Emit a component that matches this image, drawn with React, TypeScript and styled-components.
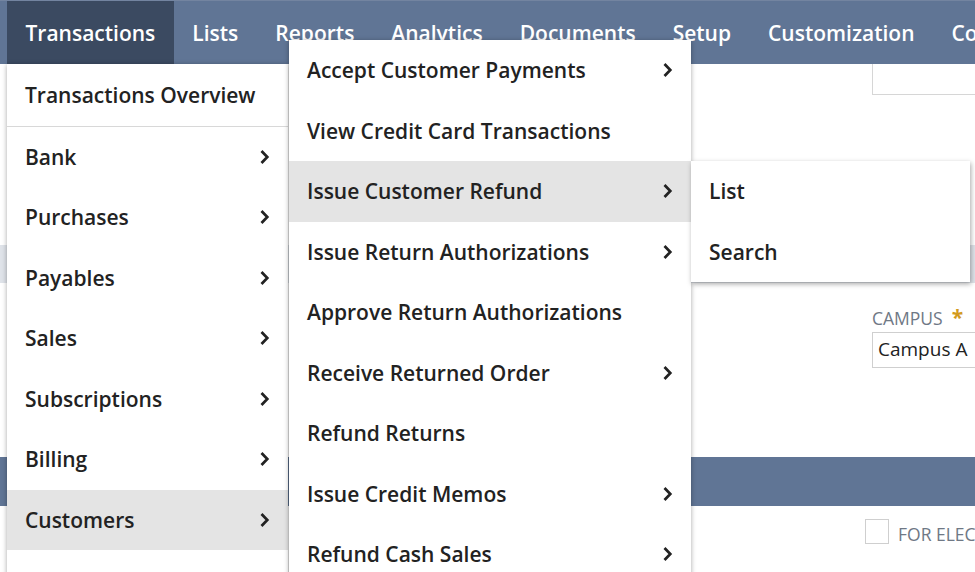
import React from "react";
import styled, { createGlobalStyle } from "styled-components";

const GlobalStyle = createGlobalStyle`
  html, body {
    margin: 0;
    padding: 0;
    background: #fff;
    overflow: hidden;
  }
  body {
    font-family: "Open Sans", "Noto Sans", "Liberation Sans", sans-serif;
    color: #222;
  }
`;

const Page = styled.div`
  position: relative;
  width: 975px;
  height: 572px;
  overflow: hidden;
  background: #fff;
`;

const NavBar = styled.nav`
  display: flex;
  align-items: stretch;
  height: 64px;
  padding-left: 7px;
  background: #607595;
  border-top: 1px solid #7384a0;
  box-sizing: border-box;
  white-space: nowrap;
`;

const NavItem = styled.div<{ $active?: boolean }>`
  display: flex;
  align-items: center;
  padding: 0 18.5px;
  font-size: 21px;
  font-weight: 600;
  color: #fff;
  background: ${(p) => (p.$active ? "#3b4a61" : "transparent")};
`;

const Content = styled.main`
  display: flex;
  flex-direction: column;
`;

const FieldRow = styled.div<{ $height: number }>`
  display: flex;
  flex-direction: column;
  height: ${(p) => p.$height}px;
  padding-left: 872px;
  box-sizing: border-box;
`;

const TopSearch = styled.div`
  width: 130px;
  height: 31px;
  border: 1px solid #d6d6d6;
  border-top: none;
  box-sizing: border-box;
`;

const GrayBand = styled.div`
  height: 38px;
  background: #dfe3e9;
`;

const Label = styled.div`
  margin-top: 23px;
  height: 22px;
  font-size: 17.5px;
  line-height: 22px;
  color: #6f7885;
  white-space: nowrap;
`;

const Required = styled.span`
  margin-left: 9px;
  color: #d39a1e;
  font-weight: 700;
  font-size: 21px;
`;

const Input = styled.div`
  margin-top: 4px;
  width: 130px;
  height: 36px;
  border: 1px solid #cfcfcf;
  box-sizing: border-box;
  padding-left: 5px;
  font-size: 19px;
  line-height: 33px;
  color: #222;
  white-space: nowrap;
`;

const BlueBand = styled.div`
  margin-top: 78px;
  height: 49px;
  background: #607595;
`;

const CheckRow = styled.div`
  display: flex;
  align-items: center;
  gap: 9px;
  margin-top: 10px;
  padding-left: 865px;
  white-space: nowrap;
`;

const CheckBox = styled.span`
  flex-shrink: 0;
  width: 24px;
  height: 25px;
  border: 1px solid #cfcfcf;
  box-sizing: border-box;
`;

const CheckText = styled.span`
  margin-top: 6px;
  font-size: 17.5px;
  color: #6f7885;
`;

const Menu = styled.ul<{ $left: number; $top: number; $width: number }>`
  position: absolute;
  left: ${(p) => p.$left}px;
  top: ${(p) => p.$top}px;
  width: ${(p) => p.$width}px;
  margin: 0;
  padding: 0;
  list-style: none;
  background: #fff;
  box-shadow: 0 1px 5px rgba(0, 0, 0, 0.35);
  z-index: 2;
`;

const FlyOut = styled.ul`
  position: absolute;
  left: 100%;
  top: 0;
  width: 279px;
  margin: 0;
  padding: 0;
  list-style: none;
  background: #fff;
  box-shadow: 1px 2px 5px rgba(0, 0, 0, 0.35);
  z-index: 3;
`;

const Item = styled.li<{ $hover?: boolean; $divider?: boolean }>`
  position: relative;
  display: flex;
  align-items: center;
  justify-content: space-between;
  height: ${(p) => (p.$divider ? 62.5 : 60.5)}px;
  padding: 0 18px;
  box-sizing: border-box;
  font-size: 21px;
  font-weight: 600;
  color: #222;
  white-space: nowrap;
  background: ${(p) => (p.$hover ? "#e4e4e4" : "#fff")};
  border-bottom: ${(p) => (p.$divider ? "1px solid #d8d8d8" : "none")};
`;

const Chevron = () => (
  <svg width="11" height="16" viewBox="0 0 11 16">
    <path d="M2.5 2 L8.3 8 L2.5 14" fill="none" stroke="#222" strokeWidth="2.7" />
  </svg>
);

const navItems = ["Transactions", "Lists", "Reports", "Analytics", "Documents", "Setup", "Customization", "Commerce"];

const leftItems = ["Bank", "Purchases", "Payables", "Sales", "Subscriptions", "Billing", "Customers", "Employees"];

const customerItems: { label: string; sub?: boolean }[] = [
  { label: "Accept Customer Payments", sub: true },
  { label: "View Credit Card Transactions" },
  { label: "Issue Customer Refund", sub: true },
  { label: "Issue Return Authorizations", sub: true },
  { label: "Approve Return Authorizations" },
  { label: "Receive Returned Order", sub: true },
  { label: "Refund Returns" },
  { label: "Issue Credit Memos", sub: true },
  { label: "Refund Cash Sales", sub: true },
];

export default function App() {
  return (
    <Page>
      <GlobalStyle />
      <NavBar>
        {navItems.map((n, i) => (
          <NavItem key={n} $active={i === 0}>
            {n}
          </NavItem>
        ))}
      </NavBar>

      <Content>
        <FieldRow $height={181}>
          <TopSearch />
        </FieldRow>
        <GrayBand />
        <FieldRow $height={96}>
          <Label>
            CAMPUS<Required>*</Required>
          </Label>
          <Input>Campus A</Input>
        </FieldRow>
        <BlueBand />
        <CheckRow>
          <CheckBox />
          <CheckText>FOR ELECTRONIC BANK PAYMENT</CheckText>
        </CheckRow>
      </Content>

      <Menu $left={7} $top={64} $width={281}>
        <Item $divider>Transactions Overview</Item>
        {leftItems.map((l) => (
          <Item key={l} $hover={l === "Customers"}>
            {l}
            <Chevron />
          </Item>
        ))}
      </Menu>

      <Menu $left={289} $top={40} $width={402}>
        {customerItems.map((c) => (
          <Item key={c.label} $hover={c.label === "Issue Customer Refund"}>
            {c.label}
            {c.sub && <Chevron />}
            {c.label === "Issue Customer Refund" && (
              <FlyOut>
                <Item>List</Item>
                <Item>Search</Item>
              </FlyOut>
            )}
          </Item>
        ))}
      </Menu>
    </Page>
  );
}
